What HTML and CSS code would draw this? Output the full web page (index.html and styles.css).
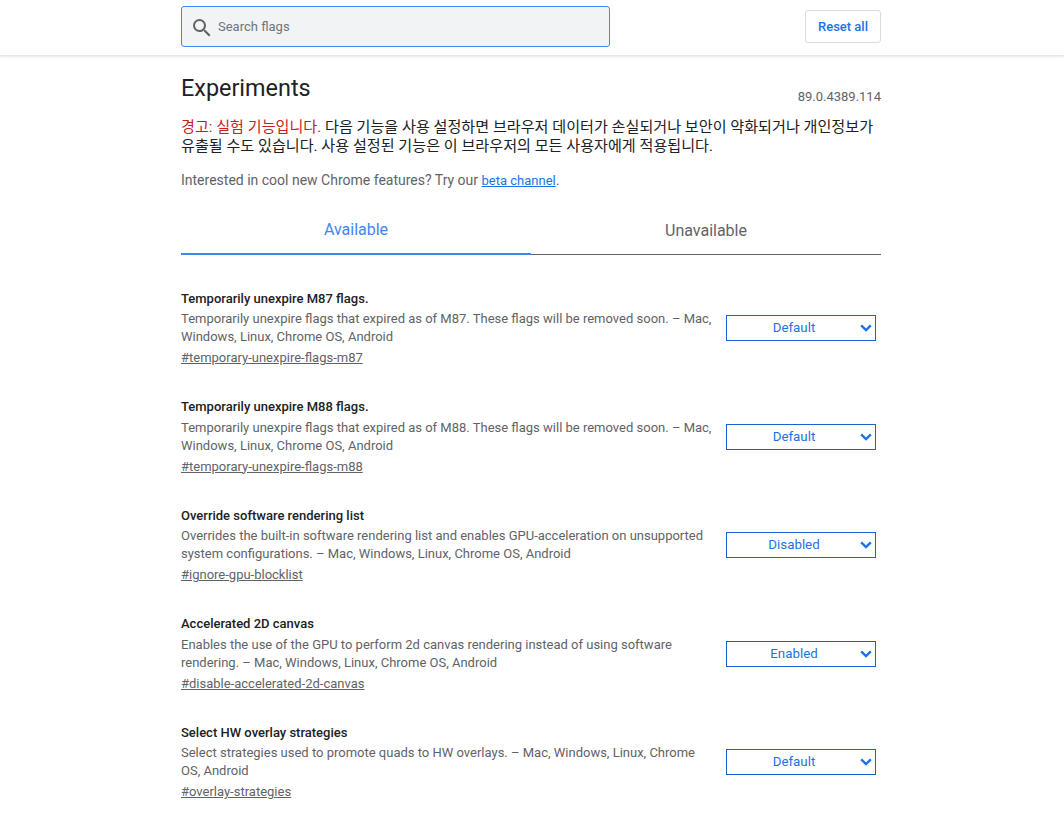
FILE: index.html
```html
<!DOCTYPE html>
<html lang="en">
<head>
  <meta charset="UTF-8">
  <title>Experiments</title>
  <link rel="stylesheet" href="styles.css">
</head>
<body>
  <div class="header">
    <div class="header-inner">
      <div class="search">
        <svg class="search-icon" width="24" height="24" viewBox="0 0 24 24"><path d="M15.5 14h-.79l-.28-.27A6.47 6.47 0 0 0 16 9.5 6.5 6.5 0 1 0 9.5 16c1.61 0 3.09-.59 4.23-1.57l.27.28v.79l5 4.99L20.49 19l-4.99-5zm-6 0C7.01 14 5 11.99 5 9.5S7.01 5 9.5 5 14 7.01 14 9.5 11.99 14 9.5 14z"/></svg>
        <span class="search-text">Search flags</span>
      </div>
      <button class="reset">Reset all</button>
    </div>
  </div>

  <div class="container">
    <div class="title-row">
      <h1>Experiments</h1>
      <span class="version">89.0.4389.114</span>
    </div>
    <p class="warning"><span class="warning-red">경고: 실험 기능입니다.</span> 다음 기능을 사용 설정하면 브라우저 데이터가 손실되거나 보안이 약화되거나 개인정보가 유출될 수도 있습니다. 사용 설정된 기능은 이 브라우저의 모든 사용자에게 적용됩니다.</p>
    <p class="promo">Interested in cool new Chrome features? Try our <a href="#">beta channel</a>.</p>

    <div class="tabs">
      <div class="tab active">Available</div>
      <div class="tab">Unavailable</div>
    </div>

    <div class="flags">
      <div class="flag">
        <div class="flag-info">
          <h2>Temporarily unexpire M87 flags.</h2>
          <p>Temporarily unexpire flags that expired as of M87. These flags will be removed soon. – Mac, Windows, Linux, Chrome OS, Android</p>
          <a href="#">#temporary-unexpire-flags-m87</a>
        </div>
        <div class="select">Default<svg width="12" height="8" viewBox="0 0 12 8"><path d="M1.2 1.4 6 6l4.8-4.6"/></svg></div>
      </div>
      <div class="flag">
        <div class="flag-info">
          <h2>Temporarily unexpire M88 flags.</h2>
          <p>Temporarily unexpire flags that expired as of M88. These flags will be removed soon. – Mac, Windows, Linux, Chrome OS, Android</p>
          <a href="#">#temporary-unexpire-flags-m88</a>
        </div>
        <div class="select">Default<svg width="12" height="8" viewBox="0 0 12 8"><path d="M1.2 1.4 6 6l4.8-4.6"/></svg></div>
      </div>
      <div class="flag">
        <div class="flag-info">
          <h2>Override software rendering list</h2>
          <p>Overrides the built-in software rendering list and enables GPU-acceleration on unsupported system configurations. – Mac, Windows, Linux, Chrome OS, Android</p>
          <a href="#">#ignore-gpu-blocklist</a>
        </div>
        <div class="select">Disabled<svg width="12" height="8" viewBox="0 0 12 8"><path d="M1.2 1.4 6 6l4.8-4.6"/></svg></div>
      </div>
      <div class="flag">
        <div class="flag-info">
          <h2>Accelerated 2D canvas</h2>
          <p>Enables the use of the GPU to perform 2d canvas rendering instead of using software rendering. – Mac, Windows, Linux, Chrome OS, Android</p>
          <a href="#">#disable-accelerated-2d-canvas</a>
        </div>
        <div class="select">Enabled<svg width="12" height="8" viewBox="0 0 12 8"><path d="M1.2 1.4 6 6l4.8-4.6"/></svg></div>
      </div>
      <div class="flag">
        <div class="flag-info">
          <h2>Select HW overlay strategies</h2>
          <p>Select strategies used to promote quads to HW overlays. – Mac, Windows, Linux, Chrome OS, Android</p>
          <a href="#">#overlay-strategies</a>
        </div>
        <div class="select">Default<svg width="12" height="8" viewBox="0 0 12 8"><path d="M1.2 1.4 6 6l4.8-4.6"/></svg></div>
      </div>
    </div>
  </div>
</body>
</html>
```

FILE: styles.css
```css
html {
  height: 100%;
  overflow: hidden;
}
body {
  margin: 0;
  background: #fff;
  color: #5f6368;
  font-family: Roboto, "Noto Sans CJK KR", sans-serif;
  font-size: 13px;
}
.header {
  height: 55px;
  border-bottom: 1px solid #e8e8e8;
  box-shadow: 0 1px 2px rgba(60,64,67,0.12);
}
.header-inner {
  width: 700px;
  margin-left: 181px;
  padding-top: 6px;
  display: flex;
  justify-content: space-between;
  align-items: flex-start;
}
.search {
  width: 427px;
  height: 39px;
  display: flex;
  align-items: center;
  background: #f1f3f4;
  border: 1px solid #4285f4;
  border-radius: 3px;
}
.search-icon {
  margin: 2px 0 0 8px;
  fill: #5f6368;
}
.search-text {
  margin-left: 4px;
  font-size: 13px;
  color: #70757a;
}
.reset {
  width: 76px;
  height: 33px;
  margin-top: 4px;
  padding: 0;
  background: #fff;
  border: 1px solid #dadce0;
  border-radius: 3px;
  color: #1a73e8;
  font-family: Roboto, sans-serif;
  font-size: 13px;
  font-weight: 500;
}
.container {
  width: 700px;
  margin-left: 181px;
}
.title-row {
  display: flex;
  justify-content: space-between;
  align-items: flex-end;
  padding-top: 16px;
}
h1 {
  margin: 0;
  font-size: 23.4px;
  font-weight: 400;
  line-height: 32px;
  color: #202124;
}
.version {
  font-size: 13px;
}
.warning {
  margin: 14px 0 0;
  font-size: 15.12px;
  line-height: 18.5px;
  color: #202124;
}
.warning-red {
  color: #c5221f;
}
.promo {
  margin: 16px 0 0;
  font-size: 14px;
  line-height: 18px;
}
.promo a {
  font-size: 13px;
  color: #1a73e8;
}
.tabs {
  display: flex;
  margin-top: 20px;
  border-bottom: 1px solid #5f6368;
}
.tab {
  flex: 1;
  height: 43px;
  line-height: 41px;
  text-align: center;
  font-size: 16px;
}
.tab.active {
  line-height: 40px;
  color: #4285f4;
  border-bottom: 2px solid #4285f4;
  margin-bottom: -1px;
}
.flags {
  padding-top: 34.6px;
}
.flag {
  height: 108.5px;
  display: flex;
  justify-content: space-between;
}
.flag-info {
  width: 535px;
}
.flag h2 {
  margin: 0;
  font-size: 13px;
  font-weight: 500;
  line-height: 18px;
  color: #202124;
}
.flag p {
  margin: 2.6px 0 0;
  font-size: 13px;
  line-height: 18px;
}
.flag a {
  display: inline-block;
  margin-top: 2.9px;
  font-size: 13px;
  line-height: 18px;
  color: #5f6368;
}
.select {
  position: relative;
  box-sizing: border-box;
  width: 150px;
  height: 26px;
  margin: 25.6px 5px 0 0;
  line-height: 24.5px;
  padding-right: 14px;
  text-align: center;
  border: 1px solid #1a62d0;
  color: #1a73e8;
  font-size: 13.33px;
}
.select svg {
  position: absolute;
  right: 3px;
  top: 8px;
  fill: none;
  stroke: #1a73e8;
  stroke-width: 2.4;
}
```
